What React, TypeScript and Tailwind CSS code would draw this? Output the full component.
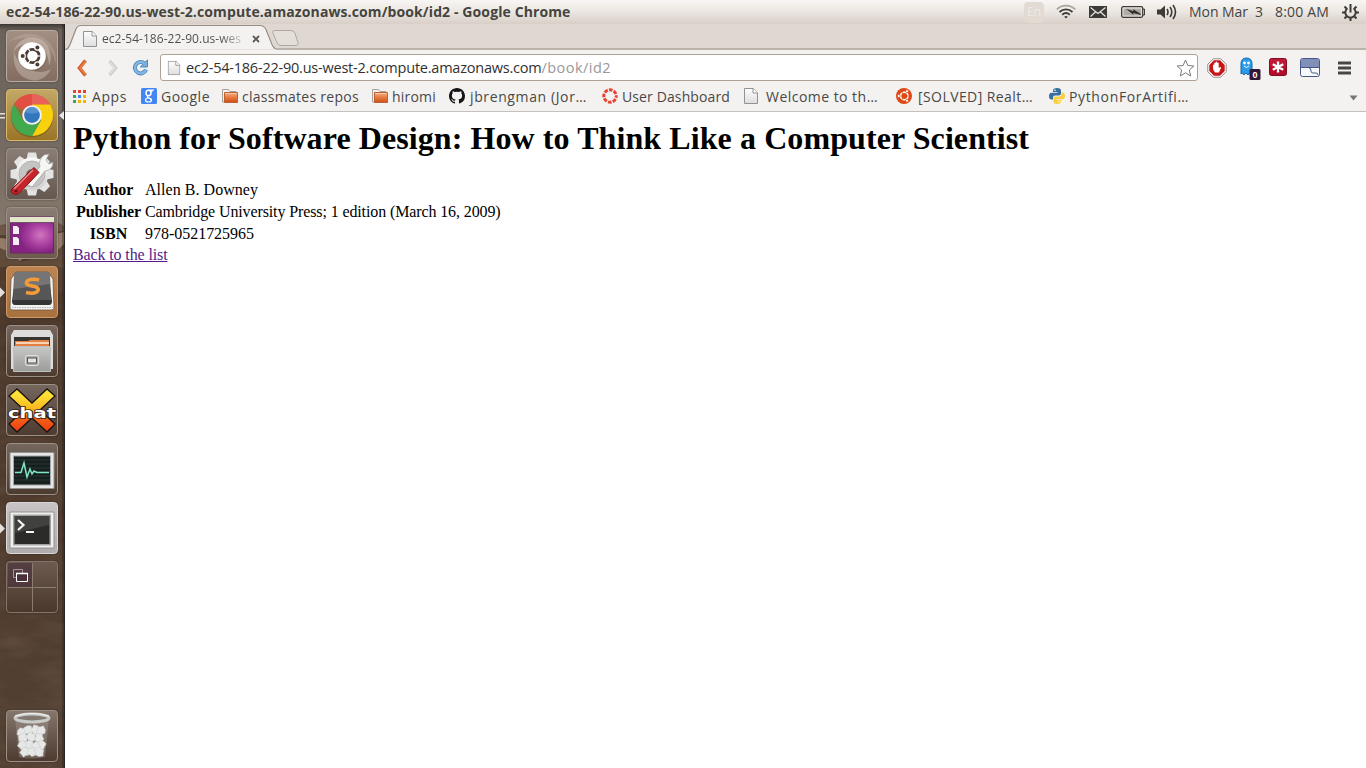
import { useLayoutEffect, useRef, useState } from 'react';
import type { ReactNode } from 'react';

/** A label whose tracking is adjusted so that it fills the given width. */
function Label({ w, className = '', children }: { w: number; className?: string; children: ReactNode }) {
  const ref = useRef<HTMLSpanElement>(null);
  const [tracking, setTracking] = useState(0);
  useLayoutEffect(() => {
    const el = ref.current;
    if (!el) return;
    const count = (el.textContent || '').length;
    setTracking((w - el.getBoundingClientRect().width) / count);
  }, [w]);
  return (
    <span ref={ref} className={'inline-block shrink-0 whitespace-pre ' + className} style={{ letterSpacing: tracking + 'px' }}>
      {children}
    </span>
  );
}

function PageIcon({ className = '' }: { className?: string }) {
  return (
    <svg width="14" height="16" viewBox="0 0 14 16" className={'shrink-0 ' + className}>
      <defs>
        <linearGradient id="sheet" x1="0" y1="0" x2="0" y2="1">
          <stop offset="0" stopColor="#fdfdfd" />
          <stop offset="1" stopColor="#dedede" />
        </linearGradient>
      </defs>
      <path d="M.5.5h8.700l4.300 4.300v10.700H.5z" fill="url(#sheet)" stroke="#929292" />
      <path d="M9 .5v4.500h4.500" fill="#fff" stroke="#929292" />
    </svg>
  );
}

function FolderIcon() {
  return (
    <svg width="16" height="16" viewBox="0 0 16 16" className="shrink-0">
      <defs>
        <linearGradient id="fold" x1="0" y1="0" x2="0" y2="1">
          <stop offset="0" stopColor="#f4b48c" />
          <stop offset=".45" stopColor="#e87f45" />
          <stop offset="1" stopColor="#cf4d16" />
        </linearGradient>
      </defs>
      <path d="M.5 14V1.500h6l1.500 2h6V14z" fill="#f1efed" stroke="#a8a29d" />
      <path d="M2.500 4.500h13v10h-13z" fill="url(#fold)" stroke="#bd6234" />
      <path d="M3.500 5.500h11" stroke="#fbc6a1" />
    </svg>
  );
}

function CircleOfFriends({ cx, cy, r, color, bg }: { cx: number; cy: number; r: number; color: string; bg: string }) {
  return (
    <g>
      <circle cx={cx} cy={cy} r={r * 0.68} fill="none" stroke={color} strokeWidth={r * 0.28} />
      {[60, 180, 300].map((a) => {
        const t = (a * Math.PI) / 180;
        return (
          <g key={a}>
            <path d={`M${cx} ${cy}L${cx - Math.cos(t) * r} ${cy - Math.sin(t) * r}`} stroke={bg} strokeWidth={r * 0.12} />
            <circle cx={cx + Math.cos(t) * r} cy={cy + Math.sin(t) * r} r={r * 0.27} fill={color} stroke={bg} strokeWidth={r * 0.12} />
          </g>
        );
      })}
    </g>
  );
}

function TopBar() {
  return (
    <header className="flex h-6 shrink-0 items-center bg-linear-to-b from-[#f8f6f4] via-[#ebe6e1] to-[#d8cfc7] pl-1.5 font-['Open_Sans','Noto_Sans',sans-serif] text-[#45443f]">
      <Label w={564.500} className="text-[14px] leading-6 font-bold">ec2-54-186-22-90.us-west-2.compute.amazonaws.com/book/id2 - Google Chrome</Label>
      <span className="ml-[453.500px] flex h-[21px] w-5 items-center justify-center rounded-sm bg-[#e1dbd4] text-[12px] text-[#eeeae5]">En</span>
      <svg width="20" height="16" viewBox="0 0 20 16" className="ml-3 shrink-0" fill="none" strokeWidth="1.800">
        <path d="M.8 5.300C6 .3 14 .3 19.200 5.300" stroke="#aaa5a0" />
        <path d="M3.500 8C7.300 4.500 12.700 4.500 16.500 8" stroke="#3c3b37" />
        <path d="M6.200 10.700c2.300-2 5.300-2 7.600 0" stroke="#3c3b37" />
        <path d="M8.200 12.700q1.800-1.400 3.600 0L10 14.500z" fill="#3c3b37" />
      </svg>
      <svg width="18" height="12" viewBox="0 0 18 12" className="ml-[13px] shrink-0">
        <path d="M0 0h18v12H0z" fill="#3c3b37" />
        <path d="m1.500 1.500 7.500 6 7.500-6M1.500 10.500 6.500 6M16.500 10.500 11.500 6" fill="none" stroke="#eeeae6" strokeWidth="1.100" />
      </svg>
      <svg width="24" height="12" viewBox="0 0 24 12" className="ml-3.5 shrink-0">
        <rect x=".7" y=".7" width="21" height="10.600" rx="1.500" fill="none" stroke="#3c3b37" strokeWidth="1.300" />
        <path d="M22 3h1.500v6H22" fill="none" stroke="#3c3b37" />
        <path d="M2.500 2.500h17.500v7H2.500z" fill="#b0aba6" />
        <path d="m5 2.800 7.500 2.400-.3-2 7 4.300 1 1.500-8-2.100.4 2z" fill="#302f2c" />
      </svg>
      <svg width="21" height="16" viewBox="0 0 21 16" className="ml-3 shrink-0" fill="none" stroke="#3c3b37" strokeWidth="1.600">
        <path d="M0 5.500h3.500L8 1.500v13l-4.500-4H0z" fill="#3c3b37" stroke="none" />
        <path d="M10 5q2 3 0 6M13 3q3.600 5 0 10M16 1q5 7 0 14" />
      </svg>
      <Label w={74} className="ml-[11px] text-[14px] leading-6">{'Mon Mar  3'}</Label>
      <Label w={54} className="ml-3 text-[14px] leading-6">8:00 AM</Label>
      <svg width="17" height="17" viewBox="0 0 17 17" className="ml-[13px] shrink-0" fill="none" stroke="#3c3b37">
        <path d="M5.500 4.200a5.200 5.200 0 1 0 6 0" strokeWidth="2" />
        <path d="M8.500 0v8.500" strokeWidth="2" />
        <path d="M0 8.500h3M14 8.500h3M8.500 13.500V17M2.500 2.500l2 2M14.500 2.500l-2 2M2.500 14.500l2-2M14.500 14.500l-2-2" strokeWidth="2" />
      </svg>
    </header>
  );
}

function Tile({ tone = 'from-[#8a7d75] to-[#655850]', edge = 'border-[#9b9088]', className = '', children }: { tone?: string; edge?: string; className?: string; children: ReactNode }) {
  return (
    <div className={`relative ml-1.5 h-[52px] w-[52px] shrink-0 rounded-[4px] border bg-linear-to-b shadow-[0_0_2px_rgba(20,10,5,0.4)] ${tone} ${edge} ${className}`}>
      <svg width="52" height="52" viewBox="0 0 52 52" className="-m-px block overflow-visible">{children}</svg>
    </div>
  );
}

const runMark = <path d="M-6 21.500 -1 26.500-6 31.500z" fill="#e2dfdd" />;

const paperBalls = [[16, 22], [23, 20], [30, 20], [35, 21], [17, 28], [25, 27], [33, 28], [35, 35], [17, 35], [24, 35], [30, 37], [19, 42], [26, 42], [33, 42]];

function Launcher() {
  return (
    <nav className="relative flex w-[65px] shrink-0 flex-col gap-[7px] overflow-hidden border-r border-[#29231f] bg-[#4d392c] pt-1.5 pb-1.5">
      <svg width="64" height="744" viewBox="0 0 64 744" className="absolute top-0 left-0">
        <defs>
          <linearGradient id="sky" x1="0" y1="0" x2="0" y2="1">
            <stop offset="0" stopColor="#3d3733" />
            <stop offset=".03" stopColor="#6b625c" />
            <stop offset=".5" stopColor="#716861" />
            <stop offset="1" stopColor="#85776b" />
          </linearGradient>
          <linearGradient id="ground" x1="0" y1="0" x2="0" y2="1">
            <stop offset="0" stopColor="#5a4534" />
            <stop offset=".4" stopColor="#4d392b" />
            <stop offset="1" stopColor="#524033" />
          </linearGradient>
          <filter id="soil" x="0" y="0" width="100%" height="100%">
            <feTurbulence type="fractalNoise" baseFrequency=".025 .07" numOctaves="3" seed="6" />
            <feColorMatrix values="0 0 0 0 .62 0 0 0 0 .46 0 0 0 0 .34 .9 0 0 0 -.35" />
          </filter>
        </defs>
        <path d="M0 0h64v744H0z" fill="url(#ground)" />
        <path d="M0 0h64v203H0z" fill="url(#sky)" />
        <path d="M0 201q12-3 20 0t20-2 24 3v5q-15 1-26 3t-38 1z" fill="#6b5444" />
        <path d="M0 214q25 4 64-6v12q-9 11-20 16l-14-6-10 7-20-9z" fill="#947b67" />
        <path d="M0 224 14 230l6 8 12-3 32-12v20H0z" fill="#604a39" />
        <path d="M0 203h64v541H0z" filter="url(#soil)" opacity=".22" />
        <path d="M62 0h2v744h-2z" fill="#231b16" opacity=".35" />
      </svg>
      <Tile tone="from-[#a48f83] to-[#826d60]" edge="border-[#b8aaa0]">
        <path d="M7 24C9 11 22 4 34 9c10 5 13 17 9 27 0-13-7-21-17-22S9 18 7 24" fill="#d5c8bf" opacity=".5" />
        <path d="M8 22c-2 14 5 26 17 28 9 2 17-4 20-11-7 4-16 4-23-1S11 32 8 22" fill="#dacdc4" opacity=".4" />
        <path d="M2 12q18-14 36-4 13 9 12 26-4-20-20-24T2 12" fill="#c9b9ae" opacity=".3" />
        <circle cx="26.500" cy="27" r="14" fill="#483a33" opacity=".25" />
        <circle cx="26" cy="26" r="13.800" fill="#fff" />
        <CircleOfFriends cx={26.500} cy={26} r={9.800} color="#4b3d35" bg="#fff" />
      </Tile>
      <Tile tone="from-[#c2a866] to-[#9b7525]" edge="border-[#dab96b]">
        <path d="M-6 24h5v1.500h-5zM-6 28h5v1.500h-5z" fill="#e5e1dd" />
        <path d="m53 26.500 5-4.500v9z" fill="#ebe8e5" />
        <circle cx="26" cy="27" r="21.500" fill="#4e3a15" opacity=".35" />
        <path d="M26 26 7.800 15.500A21 21 0 0 1 44.200 15.500z" fill="#e34e43" />
        <path d="M26 5a21 21 0 0 1 18.200 10.500H26z" fill="#e8625a" />
        <path d="M26 15.500h18.200A21 21 0 0 1 26 47l9-16z" fill="#f8d00e" />
        <path d="M7.800 15.500A21 21 0 0 0 26 47l8.700-15-17.700-1z" fill="#43a94d" />
        <circle cx="26" cy="26" r="9.800" fill="#f2f2f0" />
        <circle cx="26" cy="26" r="7.900" fill="#3476bd" />
        <path d="M19 23a7.500 7.500 0 0 1 14 0q-7 3-14 0" fill="#72a5d7" opacity=".6" />
      </Tile>
      <Tile>
        <defs><linearGradient id="metal" x1="0" y1="0" x2="0" y2="1"><stop stopColor="#fafafa" /><stop offset="1" stopColor="#d0d0cf" /></linearGradient></defs>
        <g fill="#e4e4e3">
          {[0, 45, 90, 135, 180, 225, 270, 315].map((a) => <path key={a} d="m22 4.500-1.500 7h11L30 4.500z" transform={`rotate(${a} 26 26)`} />)}
          <circle cx="26" cy="26" r="16.500" fill="url(#metal)" />
        </g>
        <circle cx="26" cy="26" r="13" fill="#c4c4c2" stroke="#b5b5b4" />
        <circle cx="26" cy="27" r="6" fill="#706761" />
        <path d="m20 36 14-17q-2-7 4-12l5-1-3 6 3 4 4-2q0 8-8 9L26 39z" fill="#f6f6f5" stroke="#a3a3a3" strokeWidth=".7" />
        <path d="M6 41 28 19.500l5 5L13 45.500q-4 2-6.500 0T6 41" fill="#c5242c" stroke="#831317" />
        <path d="m8 41 19-19" stroke="#ef8c88" strokeWidth="1.500" />
        <circle cx="10" cy="43" r="1.600" fill="#6b0e12" />
      </Tile>
      <Tile tone="from-[#897d74] to-[#6e5b4e]">
        <defs><radialGradient id="violet" cx=".7" cy=".5"><stop stopColor="#d077bf" /><stop offset=".55" stopColor="#a940a1" /><stop offset="1" stopColor="#862482" /></radialGradient></defs>
        <path d="M4.500 10h43v36h-43z" fill="url(#violet)" stroke="#6a2766" />
        <path d="M4 10h44v5H4z" fill="#e3e6ca" /><path d="M4 15.500h44" stroke="#6d5464" />
        <path d="M7 19h4l2 2v6H7zM7 30h4l2 2v6H7z" fill="#f4eef4" />
      </Tile>
      <Tile tone="from-[#bc8451] to-[#a9713d]" edge="border-[#ce9b6a]">
        {runMark}
        <path d="M5 13 4 42q0 2 3 2h38q3 0 3-2l-1-29-5-7H10z" fill="#f2f2f2" stroke="#6a543f" strokeWidth=".8" />
        <path d="M10 6h32l4 29q0 4-3 4H9q-3 0-3-4z" fill="#353535" />
        <path d="M10 6h32q1.500 0 2 3l1 25H7L8 9q.5-3 2-3" fill="#565656" /><path d="M10 6h32q1.500 0 2 3v9L8 23V9q.5-3 2-3" fill="#757575" />
        <path d="M6 41.500h41" stroke="#b5b5b5" strokeDasharray="1.500 1" />
        <path d="M33 14q-4-1.200-8.500-.5-4.500 1-4 4 .8 2 7 2.800 5.500 1 4.500 4.200-2 4-12 2" fill="none" stroke="#f39a39" strokeWidth="3.600" />
      </Tile>
      <Tile tone="from-[#75675e] to-[#4d3b30]">
        <defs><linearGradient id="drawer" x1="0" y1="0" x2="0" y2="1"><stop stopColor="#c8c8c7" /><stop offset="1" stopColor="#9b9b9a" /></linearGradient></defs>
        <path d="M8 5h36l3 5v34H5V10z" fill="#dcdcdb" />
        <path d="M8 12h36v12H8z" fill="#353433" /><path d="M9 16h13l2-1h19v8H9z" fill="#e48142" /><path d="M10 18h33" stroke="#fff0dc" strokeWidth="1.600" />
        <path d="M7.500 21.500h37v25h-37z" fill="url(#drawer)" stroke="#c0c0bf" />
        <rect x="19.500" y="30.500" width="13" height="10" rx="2" fill="#aaa" stroke="#e4e4e4" />
        <rect x="21.500" y="33" width="9" height="5" fill="#e4e4e4" stroke="#555" />
      </Tile>
      <Tile tone="from-[#75675e] to-[#4d3b30]">
        <defs><linearGradient id="flame" x1="0" y1="0" x2="0" y2="1"><stop offset=".15" stopColor="#ffe037" /><stop offset=".5" stopColor="#fbb11a" /><stop offset=".65" stopColor="#f4661a" /><stop offset="1" stopColor="#ee3a10" /></linearGradient></defs>
        <path d="m3 12 8-7 15 14L41 5l8 7-15 14 15 14-8 8-15-14-15 14-8-8 15-14z" fill="url(#flame)" stroke="#191411" strokeWidth="1.300" />
        <text x="2" y="34" textLength="48" lengthAdjust="spacingAndGlyphs" fill="#fff" stroke="#302721" strokeWidth="1.500" paintOrder="stroke" className="font-['DejaVu_Sans'] text-[14px] font-bold">chat</text>
      </Tile>
      <Tile tone="from-[#75675e] to-[#4d3b30]">
        <path d="M4 9.500h44v36H4z" fill="#e5e6e5" stroke="#8f928f" /><path d="M7 12.500h38v30H7z" fill="#a5a8a6" />
        <path d="M8 13.500h36v28H8z" fill="#141f1e" />
        <path d="M8 17h36M8 21h36M8 25h36M8 29h36M8 33h36M8 37h36" stroke="#2b3735" />
        <path d="M9 29.500h6l3-9.500 3 14 3-8 2 5 2-3 3 1.500h12" fill="none" stroke="#7fe5c3" strokeWidth="1.500" />
      </Tile>
      <Tile tone="from-[#c7c2c4] to-[#b0abad]" edge="border-[#dbd7d9]">
        {runMark}
        <path d="M4 10h44v36H4z" fill="#f0f0ef" stroke="#929292" /><path d="M7 12.500h38v31H7z" fill="#a2a2a0" />
        <path d="M8.500 14h35v28h-35z" fill="#2b2c2a" /><path d="M9 14h34v9L9 31z" fill="#41423f" />
        <path d="m12 18 5.500 5-5.500 5" fill="none" stroke="#f5f5f5" strokeWidth="2.200" /><path d="M20 30h8" stroke="#f5f5f5" strokeWidth="2" />
      </Tile>
      <Tile tone="from-[#6d5b51] to-[#4a382b]" edge="border-[#83756b]">
        <path d="M2 2h24v24H2z" fill="#4a303a" opacity=".65" />
        <path d="M26.500 2v48M2 26.500h48" stroke="#8b7d71" />
        <path d="M7.500 8.500h9v8h-9z" fill="none" stroke="#a7969b" /><path d="M10.500 12.500h11v8h-11z" fill="#4a303a" stroke="#fff" /><path d="M10 12.500h12" stroke="#fff" strokeWidth="1.500" />
      </Tile>
      <Tile className="mt-auto" tone="from-[#85766c] to-[#4d3b30]">
        <path d="m9 8 4 39q13 3 26 0l4-39z" fill="#b8b1ac" opacity=".3" />
        <g fill="#e6e7e7">
          {paperBalls.map(([x, y], i) => (
            <path key={i} d="m-5-2 3-3 3 1 3-1 1 4 1 3-4 2-2 2-3-2-3-1z" transform={`translate(${x} ${y}) rotate(${i * 47}) scale(.85)`} stroke="#c9cccc" strokeWidth=".6" />
          ))}
        </g>
        <ellipse cx="26" cy="8" rx="17" ry="4" fill="#827971" stroke="#c9cbc9" strokeWidth="3" />
        <path d="M9 6q17-5 34 0" fill="none" stroke="#f5f5f4" />
      </Tile>
    </nav>
  );
}

function TabStrip() {
  return (
    <div className="relative flex h-[26px] shrink-0 items-center bg-[#dfd7d1]">
      <svg width="1301" height="26" viewBox="0 0 1301 26" className="absolute top-0 left-0">
        <path d="M0 25.500h2q2-1 3-4L11 5q1.500-4 5-4h179q4 0 6 4l7 16q2 4.500 5 4.500" fill="#f4f2f1" />
        <path d="M0 25.500q3 0 5-5L11 5q1.500-3.500 5-3.500h179q4 0 6 4l6 15q2 4.500 5 4.500h1089" fill="none" stroke="#988d83" strokeWidth="1.200" />
        <path d="M209 6.500h17q3 0 4 3l3 9q1 3-3 3h-14q-3 0-4-3l-4-9q-1-3 1-3z" fill="#e4dfd9" stroke="#b0a79f" />
      </svg>
      <div className="relative ml-[18px] flex items-center pt-[3px]">
        <PageIcon />
        <Label w={139} className="ml-[5px] bg-linear-to-r from-[#4c4b49] from-85% to-[#c8c6c4] bg-clip-text text-[12px] leading-4 text-transparent">ec2-54-186-22-90.us-wes</Label>
        <svg width="8" height="8" viewBox="0 0 8 8" className="ml-[11px]"><path d="m1 1 6 6m0-6L1 7" stroke="#5b5755" strokeWidth="1.800" /></svg>
      </div>
    </div>
  );
}

function Toolbar() {
  return (
    <div className="flex h-[35px] shrink-0 items-center bg-[#f4f2f1]">
      <svg width="10" height="18" viewBox="0 0 10 18" className="ml-3 shrink-0"><path d="M8.500 1.500 2.500 9l6 7.500" fill="none" stroke="#cf5a2a" strokeWidth="3.600" /><path d="M8.500 2.500 3 9l5.500 6.500" fill="none" stroke="#ee7f42" strokeWidth="1.800" /></svg>
      <svg width="10" height="18" viewBox="0 0 10 18" className="ml-[21px] shrink-0"><path d="m1.500 2 6 7-6 7" fill="none" stroke="#cfcdcc" strokeWidth="3.500" /><path d="m1.500 3 5 6-5 6" fill="none" stroke="#e1dfde" strokeWidth="1.800" /></svg>
      <svg width="17" height="17" viewBox="0 0 17 17" className="ml-[14px] shrink-0"><path d="M12.500 4.500a5.700 5.700 0 1 0 1.500 6" fill="none" stroke="#5288bd" strokeWidth="4" /><path d="M15.500.8v7.200H8.300z" fill="#77aedf" stroke="#5288bd" /><path d="M12.500 4.500a5.700 5.700 0 1 0 1.500 6" fill="none" stroke="#82b6e4" strokeWidth="2.400" /></svg>
      <div className="ml-[11px] flex h-[27px] w-[1038px] shrink-0 items-center rounded-[3px] border border-[#aea297] bg-white text-[14.500px] leading-6 text-[#32312f]">
        <PageIcon className="ml-1.5 scale-90" />
        <Label w={355.500} className="ml-[5px]">ec2-54-186-22-90.us-west-2.compute.amazonaws.com</Label>
        <Label w={69.500} className="text-[#999]">/book/id2</Label>
        <svg width="19" height="18" viewBox="0 0 19 18" className="mr-[2px] ml-auto"><path d="m9.500 1 2.400 5.500 6 .5-4.500 4 1.300 6-5.200-3.200L4.300 17l1.300-6-4.500-4 6-.5z" fill="#fff" stroke="#7d7a78" /></svg>
      </div>
      <svg width="20" height="20" viewBox="0 0 20 20" className="ml-[9px] shrink-0">
        <path d="M6.300.8h7.400l5.500 5.500v7.400l-5.500 5.500H6.300L.8 13.700V6.300z" fill="#fff" stroke="#8d8a88" /><path d="M6.900 2.300h6.200l4.600 4.600v6.200l-4.600 4.600H6.900l-4.600-4.600V6.900z" fill="#ca1517" />
        <path d="M6 10V7q.6-1 1.300 0v2-4q.7-1 1.400 0v3-4q.8-1 1.500 0v4-3q.8-1 1.500 0v5l1.500-1q1.500 0 0 2.500L12 14.500H8q-2-2-2-4.500" fill="#fff" />
      </svg>
      <svg width="22" height="24" viewBox="0 0 22 24" className="ml-[12px] shrink-0">
        <path d="M2 18V8q0-6 5.500-6T13 8v10l-2-1-2 2-2-2-2 2-1.500-2z" fill="#299be9" stroke="#1766a8" />
        <circle cx="5.500" cy="7" r="1.400" fill="#fff" /><circle cx="9.500" cy="7" r="1.400" fill="#fff" /><path d="M5 10q2.500 3 5 0" stroke="#fff" fill="none" />
        <rect x="10.500" y="13" width="11" height="11" rx="1.500" fill="#321637" />
        <text x="16" y="22" textAnchor="middle" fill="#fff" className="font-['Liberation_Sans'] text-[9px] font-bold">0</text>
      </svg>
      <svg width="18" height="18" viewBox="0 0 18 18" className="mb-0.5 ml-2 shrink-0"><rect x=".5" y=".5" width="17" height="17" rx="2" fill="#b30c2a" stroke="#800d20" /><path d="M1 1h16v8H1z" fill="#d8374a" opacity=".35" /><path d="M9 3.500v11M3.800 6.200l10.400 5.600M14.200 6.200 3.800 11.800" stroke="#fff" strokeWidth="2.300" /></svg>
      <svg width="20" height="20" viewBox="0 0 20 20" className="ml-[13px] shrink-0"><rect x=".5" y=".5" width="19" height="18" rx="2" fill="#f7f8fb" stroke="#48578a" /><path d="M1 1h18v8H1z" fill="#8290b9" /><path d="M1 9.500h18M9 10q2 0 2 3 0 2 2 2h3q2 0 2 2" fill="none" stroke="#48578a" /></svg>
      <svg width="13" height="14" viewBox="0 0 13 14" className="ml-[18px] shrink-0"><path d="M0 2h13M0 7h13M0 12h13" stroke="#484644" strokeWidth="2.800" /></svg>
    </div>
  );
}

const appColors = ['#e84435', '#e84435', '#e84435', '#34a853', '#4285f4', '#f4b400', '#34a853', '#f4b400', '#f4b400'];

function Bookmarks() {
  return (
    <div className="flex h-[27px] shrink-0 items-center border-b border-[#c4c0bc] bg-[#f4f2f1] pb-1 pl-2 text-[14px] leading-5 text-[#494846]">
      <svg width="13" height="13" viewBox="0 0 13 13" className="shrink-0">{appColors.map((c, i) => <rect key={i} x={(i % 3) * 5} y={Math.floor(i / 3) * 5} width="3" height="3" fill={c} />)}</svg>
      <Label w={35} className="ml-1.5 pt-0.5">Apps</Label>
      <svg width="16" height="16" viewBox="0 0 16 16" className="ml-[14px] shrink-0">
        <rect width="16" height="16" rx="1.500" fill="#4285f4" />
        <ellipse cx="7.500" cy="5" rx="2.500" ry="2.700" fill="none" stroke="#fff" strokeWidth="1.500" />
        <path d="M8 2h4l-1.200 1.100H9M7 7.800q-1.500 1 .3 2 2.500 1 2.500 2.200" fill="none" stroke="#fff" strokeWidth="1.200" />
        <ellipse cx="7.500" cy="12" rx="3" ry="2" fill="none" stroke="#fff" strokeWidth="1.200" />
      </svg>
      <Label w={49} className="ml-1 pt-0.5">Google</Label>
      <div className="ml-3 flex items-center gap-1"><FolderIcon /><Label w={117} className="pt-0.5">classmates repos</Label></div>
      <div className="ml-[13px] flex items-center gap-1"><FolderIcon /><Label w={44} className="pt-0.5">hiromi</Label></div>
      <svg width="16" height="16" viewBox="0 0 16 16" className="ml-[13px] shrink-0"><path d="M8 0C3.580 0 0 3.580 0 8c0 3.540 2.290 6.530 5.470 7.590.4.070.55-.17.550-.38v-1.490c-2.230.48-2.700-1.070-2.700-1.070-.36-.93-.89-1.170-.89-1.170-.73-.5.050-.49.050-.49.800.06 1.230.83 1.230.83.710 1.220 1.870.87 2.330.66.070-.52.280-.87.500-1.070-1.780-.2-3.640-.89-3.640-3.950 0-.87.310-1.590.820-2.150-.08-.2-.36-1.020.080-2.120 0 0 .67-.21 2.200.82a7.700 7.700 0 0 1 4 0c1.530-1.040 2.200-.82 2.200-.82.440 1.100.16 1.920.080 2.120.51.560.82 1.270.82 2.150 0 3.070-1.870 3.750-3.650 3.950.29.250.54.730.54 1.480v2.190c0 .21.150.46.550.38A8 8 0 0 0 16 8c0-4.420-3.580-8-8-8" fill="#151515" /></svg>
      <Label w={117} className="ml-[5px] pt-0.5">jbrengman (Jor…</Label>
      <svg width="16" height="16" viewBox="0 0 16 16" className="ml-[15px] shrink-0"><circle cx="8" cy="8" r="6.200" fill="none" stroke="#ea4331" strokeWidth="3" strokeDasharray="3.600 1.270" strokeDashoffset="1.800" /></svg>
      <Label w={108} className="ml-1 pt-0.5">User Dashboard</Label>
      <PageIcon className="ml-[14px]" />
      <Label w={112} className="ml-2 pt-0.5">Welcome to th…</Label>
      <svg width="16" height="16" viewBox="0 0 16 16" className="ml-[18px] shrink-0"><circle cx="8" cy="8" r="8" fill="#dd4814" /><CircleOfFriends cx={8.300} cy={8} r={5.500} color="#fff" bg="#dd4814" /></svg>
      <Label w={115} className="ml-1.5 pt-0.5">[SOLVED] Realt…</Label>
      <svg width="16" height="16" viewBox="0 0 16 16" className="ml-4 shrink-0">
        <path d="M8 0Q4 0 4 2.500V4h4.500v.7H2.500Q0 5 0 8q0 3.500 2.500 3.500H4V9.500Q4 7.500 6 7.500h4q2 0 2-2v-3Q12 0 8 0" fill="#376f9f" />
        <path d="M8 16q4 0 4-2.500V12H7.500v-.7h6Q16 11 16 8q0-3.500-2.500-3.500h-1V6.500q0 2-2 2h-4q-2 0-2 2v3Q4.500 16 8 16" fill="#f7cf40" />
        <circle cx="6" cy="2.200" r=".8" fill="#fff" /><circle cx="10" cy="13.800" r=".8" fill="#fff" />
      </svg>
      <Label w={120} className="ml-1 pt-0.5">PythonForArtifi…</Label>
      <svg width="9" height="6" viewBox="0 0 9 6" className="mt-1 mr-2 ml-auto shrink-0"><path d="M.5.5h8l-4 5z" fill="#777471" /></svg>
    </div>
  );
}

const details: [string, number, string, number][] = [
  ['Author', 49.500, 'Allen B. Downey', 113],
  ['Publisher', 65, 'Cambridge University Press; 1 edition (March 16, 2009)', 355.500],
  ['ISBN', 37.500, '978-0521725965', 109],
];

export default function App() {
  return (
    <div className="flex h-[768px] w-[1366px] flex-col overflow-hidden bg-white">
      <TopBar />
      <div className="flex min-h-0 flex-1">
        <Launcher />
        <div className="flex min-w-0 flex-1 flex-col font-['Open_Sans','Noto_Sans',sans-serif]">
          <TabStrip />
          <Toolbar />
          <Bookmarks />
          <main className="flex-1 bg-white p-2 font-['Liberation_Serif',serif] text-[16px] leading-[18px] text-black">
            <h1 className="mb-[21px] flex text-[32px] leading-[37px] font-bold"><Label w={956}>Python for Software Design: How to Think Like a Computer Scientist</Label></h1>
            <table className="border-separate border-spacing-[2px]">
              <tbody>
                {details.map(([name, nameWidth, value, valueWidth]) => (
                  <tr key={name}>
                    <th className="p-px text-center font-bold"><Label w={nameWidth} className="align-top">{name}</Label></th>
                    <td className="p-px"><Label w={valueWidth} className="align-top">{value}</Label></td>
                  </tr>
                ))}
              </tbody>
            </table>
            <a href="#list" className="flex w-fit text-[#551a8b]"><Label w={94.500} className="underline">Back to the list</Label></a>
          </main>
        </div>
      </div>
    </div>
  );
}
